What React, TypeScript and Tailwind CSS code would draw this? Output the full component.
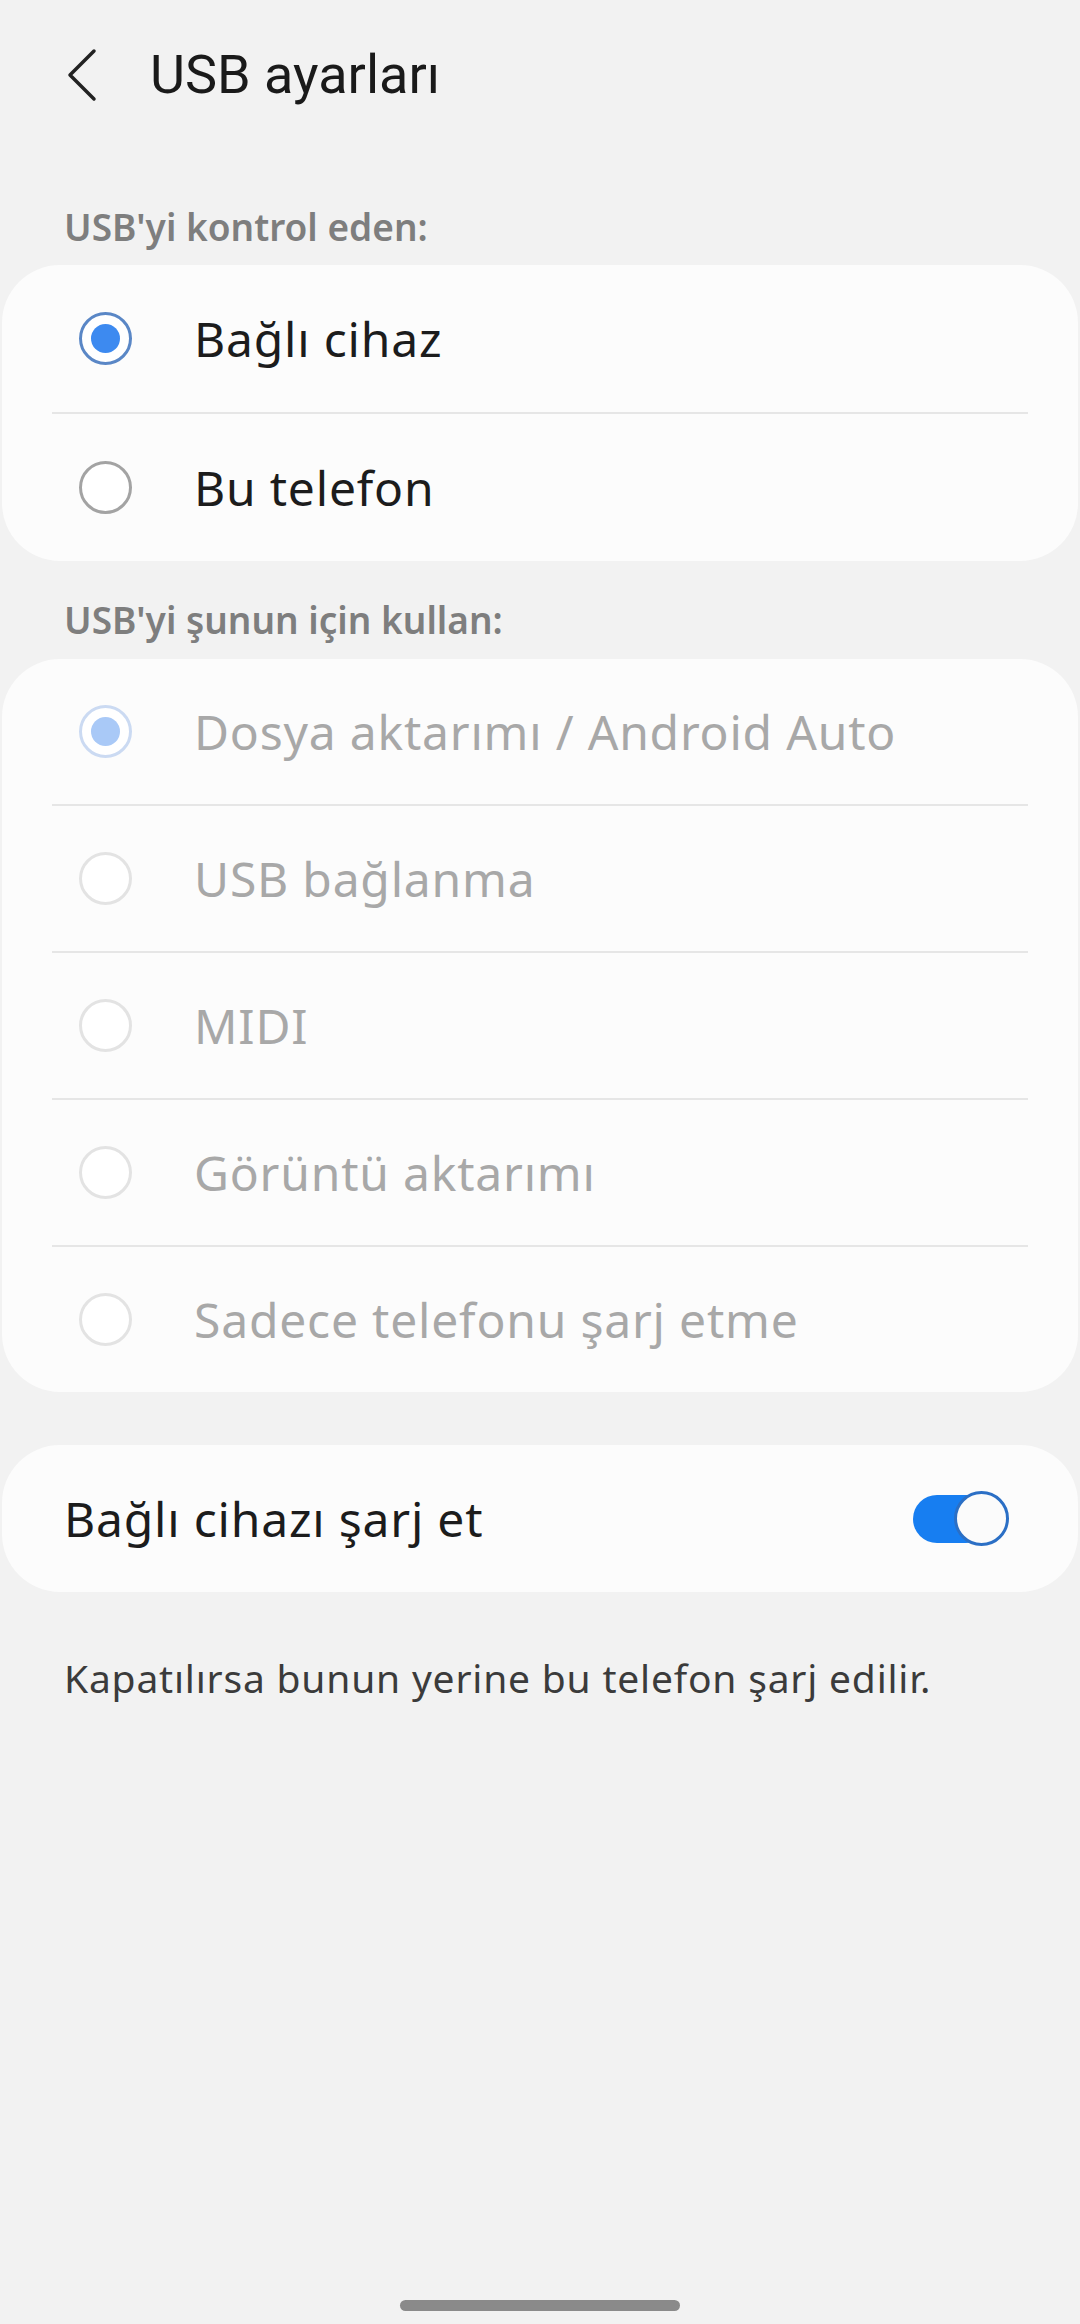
import { useState } from "react";

type Option = { label: string };

const controlOptions: Option[] = [{ label: "Bağlı cihaz" }, { label: "Bu telefon" }];

const usageOptions: Option[] = [
  { label: "Dosya aktarımı / Android Auto" },
  { label: "USB bağlanma" },
  { label: "MIDI" },
  { label: "Görüntü aktarımı" },
  { label: "Sadece telefonu şarj etme" },
];

function Radio({ checked, disabled }: { checked: boolean; disabled?: boolean }) {
  if (checked) {
    return (
      <span
        className={
          "flex h-[53px] w-[53px] shrink-0 items-center justify-center rounded-full border-[3px] bg-white " +
          (disabled ? "border-[#cbdaf2]" : "border-[#5a87c6]")
        }
      >
        <span
          className={
            "block h-[29px] w-[29px] rounded-full " + (disabled ? "bg-[#a9c9f7]" : "bg-[#3d8af0]")
          }
        />
      </span>
    );
  }
  return (
    <span
      className={
        "block h-[53px] w-[53px] shrink-0 rounded-full border-[3px] bg-white " +
        (disabled ? "border-[#e3e3e3]" : "border-[#a3a3a3]")
      }
    />
  );
}

function RadioCard({
  options,
  selected,
  disabled,
  rowClass,
  onSelect,
}: {
  options: Option[];
  selected: number;
  disabled?: boolean;
  rowClass: string;
  onSelect?: (i: number) => void;
}) {
  return (
    <div className="mx-[2px] rounded-[58px] bg-[#fcfcfc] px-[50px]">
      {options.map((o, i) => (
        <div key={o.label}>
          {i > 0 && <div className="h-[2px] bg-[#e6e6e6]" />}
          <button
            type="button"
            onClick={() => !disabled && onSelect?.(i)}
            className={"flex w-full items-center text-left " + rowClass}
          >
            <span className="ml-[27px] flex">
              <Radio checked={i === selected} disabled={disabled} />
            </span>
            <span
              className={
                "ml-[62px] text-[48px] leading-[56px] tracking-[0.8px] " +
                (disabled ? "text-[#a8a8a8]" : "text-[#1c1c1c]")
              }
            >
              {o.label}
            </span>
          </button>
        </div>
      ))}
    </div>
  );
}

export default function App() {
  const [controller, setController] = useState(0);
  const [chargeOther, setChargeOther] = useState(true);

  return (
    <div
      className="flex min-h-[2324px] flex-col bg-[#f2f2f2]"
      style={{ fontFamily: "'Noto Sans', Roboto, sans-serif" }}
    >
      {/* top bar */}
      <div className="flex h-[150px] items-center">
        <svg width="40" height="60" viewBox="0 0 40 60" className="ml-[62px]" fill="none">
          <polyline
            points="32,6 8,30 32,54"
            stroke="#222"
            strokeWidth="3.5"
            strokeLinecap="round"
            strokeLinejoin="round"
          />
        </svg>
        <h1 className="ml-[48px] font-['Roboto',sans-serif] text-[54px] leading-[64px] text-[#1a1a1a]">
          USB ayarları
        </h1>
      </div>

      <p className="pl-[64px] pt-[53px] pb-[14px] text-[37px] font-semibold leading-[48px] text-[#7e7e7e]">
        USB'yi kontrol eden:
      </p>
      <RadioCard
        options={controlOptions}
        selected={controller}
        onSelect={setController}
        rowClass="h-[147px]"
      />

      <p className="pl-[64px] pt-[35px] pb-[15px] text-[37px] font-semibold leading-[48px] text-[#7e7e7e]">
        USB'yi şunun için kullan:
      </p>
      <RadioCard options={usageOptions} selected={0} disabled rowClass="h-[145px]" />

      {/* charge toggle */}
      <div className="mx-[2px] mt-[53px] flex h-[147px] items-center justify-between rounded-[58px] bg-[#fcfcfc] pl-[62px] pr-[69px]">
        <span className="text-[48px] leading-[56px] tracking-[0.8px] text-[#1c1c1c]">
          Bağlı cihazı şarj et
        </span>
        <button
          type="button"
          onClick={() => setChargeOther((v) => !v)}
          className="flex items-center"
        >
          <span
            className={
              "block h-[48px] w-[77px] rounded-full " +
              (chargeOther ? "bg-[#177ef1]" : "bg-[#c4c4c4]")
            }
          />
          <span
            className={
              "-ml-[36px] block h-[55px] w-[55px] rounded-full border-[3px] bg-[#fbfbfb] " +
              (chargeOther ? "border-[#2b6fc5]" : "border-[#a0a0a0]")
            }
          />
        </button>
      </div>

      <p className="pl-[64px] pt-[62px] text-[39px] leading-[48px] tracking-[0.8px] text-[#3b3b3b]">
        Kapatılırsa bunun yerine bu telefon şarj edilir.
      </p>

      {/* gesture bar */}
      <div className="mt-auto flex justify-center pb-[13px]">
        <div className="h-[11px] w-[280px] rounded-full bg-[#8a8a8a]" />
      </div>
    </div>
  );
}
